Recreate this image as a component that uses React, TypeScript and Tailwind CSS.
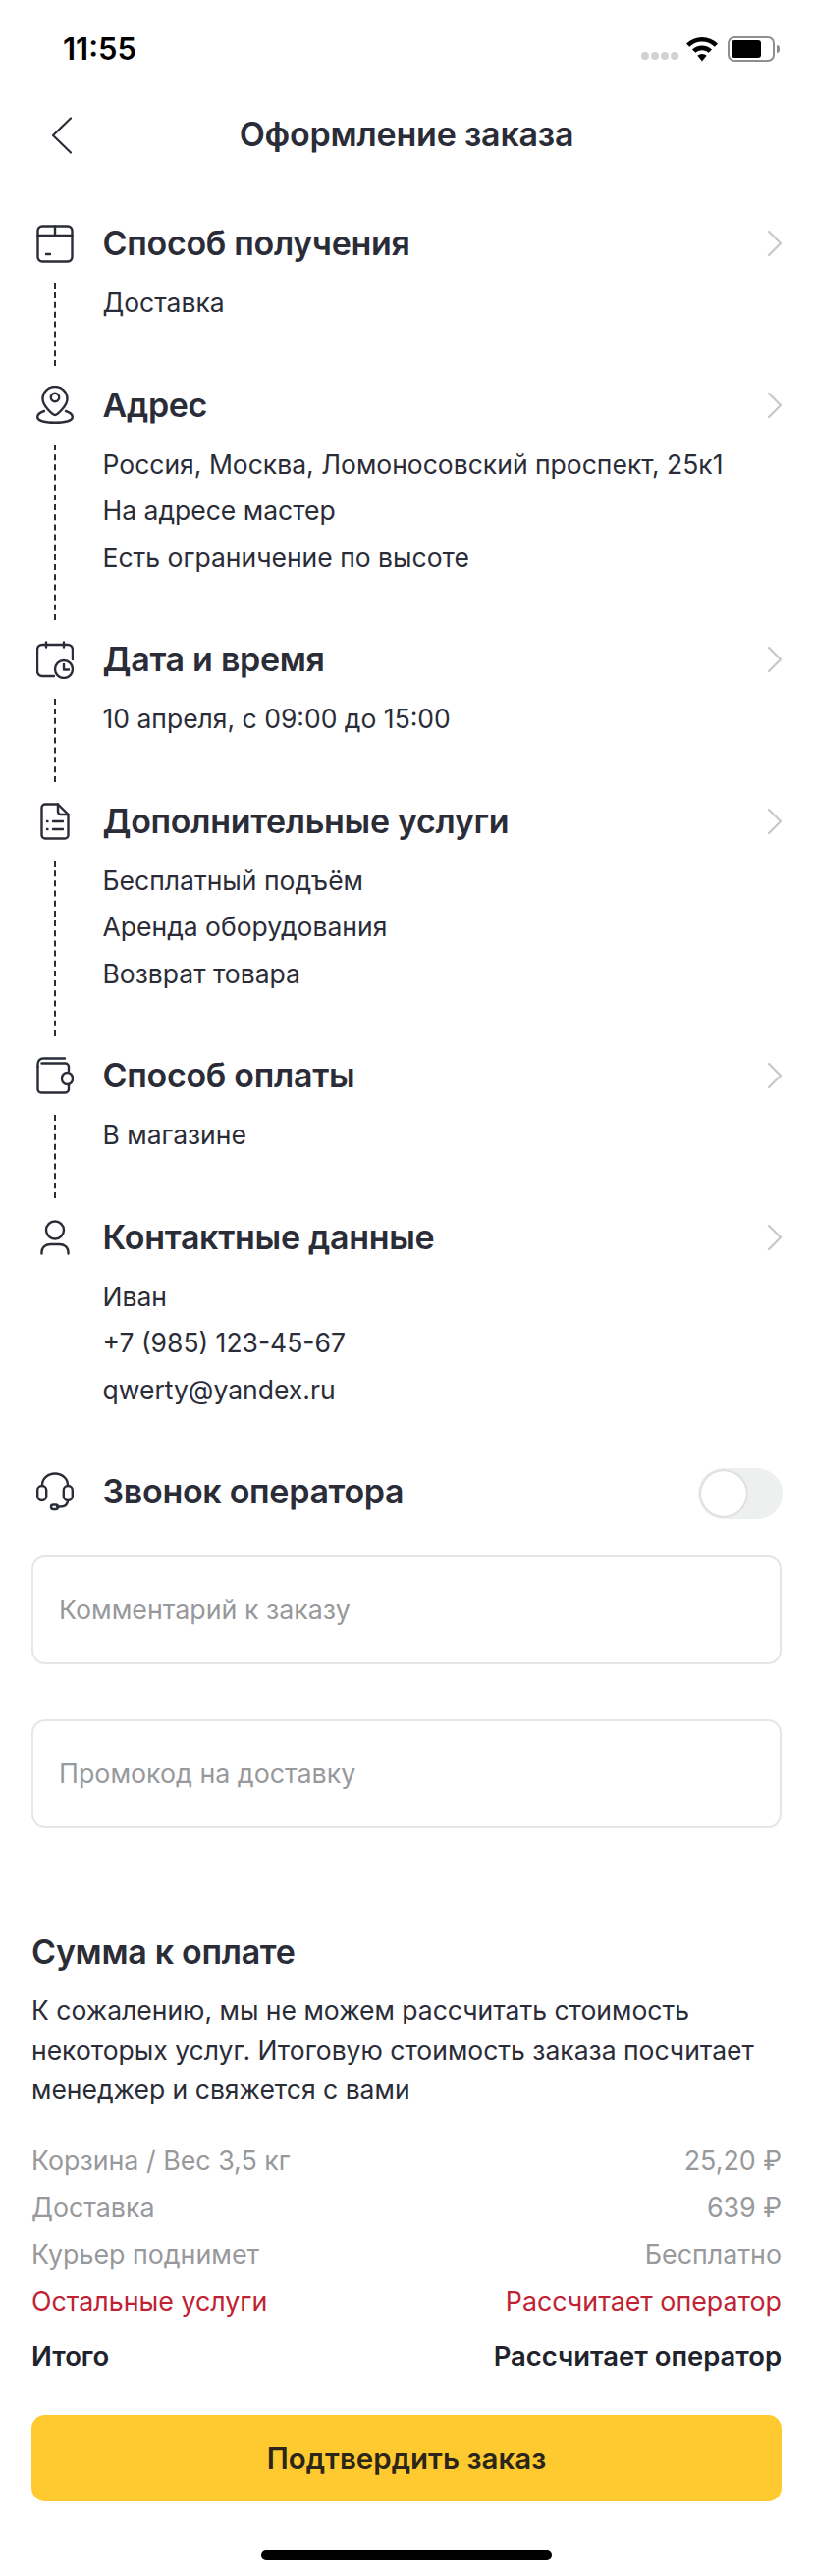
const INK = '#2a2c37';

const BoxIcon = () => (
  <svg width="38" height="39" viewBox="0 0 38 39" fill="none" stroke={INK} strokeWidth="2.4" strokeLinejoin="round" strokeLinecap="round">
    <path d="M6 1.500h26a4.500 4.500 0 0 1 4.500 4.500v27a4.500 4.500 0 0 1-4.500 4.500H6A4.500 4.500 0 0 1 1.500 33V6A4.500 4.500 0 0 1 6 1.500Z" />
    <path d="M1.500 11h35M19 1.500V11M10 30h4" />
  </svg>
);

const PinIcon = () => (
  <svg width="38" height="39" viewBox="0 0 38 39" fill="none" stroke={INK} strokeWidth="2.4" strokeLinejoin="round" strokeLinecap="round">
    <path d="M19 30c-2 0-12.500-9-12.500-16.500a12.500 12.500 0 0 1 25 0C31.500 21 21 30 19 30Z" />
    <circle cx="19" cy="12" r="4.200" />
    <path d="M8 26c-4 1.300-6.800 3.300-6.800 6 0 3.800 8 5.800 17.800 5.800S36.800 35.800 36.800 32c0-2.700-2.800-4.700-6.800-6" />
  </svg>
);

const CalendarIcon = () => (
  <svg width="38" height="39" viewBox="0 0 38 39" fill="none" stroke={INK} strokeWidth="2.4" strokeLinejoin="round" strokeLinecap="round">
    <path d="M18 36H6a5 5 0 0 1-5-5V9a5 5 0 0 1 5-5h26a5 5 0 0 1 5 5v10" />
    <path d="M10 1.500v5M28 1.500v5" />
    <circle cx="28" cy="29" r="9" />
    <path d="M28 24v5.500h5" />
  </svg>
);

const DocIcon = () => (
  <svg width="30" height="38" viewBox="0 0 30 38" fill="none" stroke={INK} strokeWidth="2.4" strokeLinejoin="round" strokeLinecap="round">
    <path d="M5 1.500h13l10.500 10.500v21a3.500 3.500 0 0 1-3.500 3.500H5A3.500 3.500 0 0 1 1.500 33V5A3.500 3.500 0 0 1 5 1.500Z" />
    <path d="M18 1.500V9a3 3 0 0 0 3 3h7.500" />
    <path d="M7 19h.5M7 27h.5M13 19h10M13 27h10" />
  </svg>
);

const WalletIcon = () => (
  <svg width="38" height="38" viewBox="0 0 38 38" fill="none" stroke={INK} strokeWidth="2.4" strokeLinejoin="round" strokeLinecap="round">
    <path d="M1.500 10V7a5.500 5.500 0 0 1 5.500-5.500h22" />
    <path d="M33 14v-4a3.500 3.500 0 0 0-3.500-3.500H5.500" />
    <path d="M1.500 10v23A3.500 3.500 0 0 0 5 36.500h24.500A3.500 3.500 0 0 0 33 33v-5" />
    <rect x="26" y="16" width="11" height="12" rx="5.500" />
  </svg>
);

const UserIcon = () => (
  <svg width="30" height="36" viewBox="0 0 30 36" fill="none" stroke={INK} strokeWidth="2.4" strokeLinejoin="round" strokeLinecap="round">
    <circle cx="15" cy="10.500" r="9" />
    <path d="M1.500 34.500v-1.500c0-5 4-8 9-8h9c5 0 9 3 9 8v1.500" />
  </svg>
);

const HeadsetIcon = () => (
  <svg width="38" height="40" viewBox="0 0 38 40" fill="none" stroke={INK} strokeWidth="2.4" strokeLinejoin="round" strokeLinecap="round">
    <path d="M6 14v-1a13 11.500 0 0 1 26 0v1" />
    <rect x="1.200" y="14" width="9" height="15" rx="4.500" />
    <rect x="27.800" y="14" width="9" height="15" rx="4.500" />
    <path d="M32 29c0 4-3 6.500-8 6.500h-3" />
    <rect x="15" y="33.500" width="7" height="4.500" rx="2.200" />
  </svg>
);

const Chevron = () => (
  <svg width="16" height="28" viewBox="0 0 16 28" fill="none" stroke="#c9cacb" strokeWidth="2.400" strokeLinecap="round" strokeLinejoin="round">
    <path d="M2 2l12 12L2 26" />
  </svg>
);

const steps = [
  { icon: <BoxIcon />, title: 'Способ получения', lines: ['Доставка'] },
  { icon: <PinIcon />, title: 'Адрес', lines: ['Россия, Москва, Ломоносовский проспект, 25к1', 'На адресе мастер', 'Есть ограничение по высоте'] },
  { icon: <CalendarIcon />, title: 'Дата и время', lines: ['10 апреля, с 09:00 до 15:00'] },
  { icon: <DocIcon />, title: 'Дополнительные услуги', lines: ['Бесплатный подъём', 'Аренда оборудования', 'Возврат товара'] },
  { icon: <WalletIcon />, title: 'Способ оплаты', lines: ['В магазине'] },
  { icon: <UserIcon />, title: 'Контактные данные', lines: ['Иван', '+7 (985) 123-45-67', 'qwerty@yandex.ru'] },
];

const prices = [
  { label: 'Корзина / Вес 3,5 кг', value: '25,20 ₽' },
  { label: 'Доставка', value: '639 ₽' },
  { label: 'Курьер поднимет', value: 'Бесплатно' },
];

export default function App() {
  return (
    <div className="w-[828px] h-[2625px] bg-white overflow-hidden font-['Inter','Noto_Sans',sans-serif] text-[#2a2c37]">
      {/* status bar */}
      <div className="h-[100px] pl-[64px] pr-[34px] pt-[30px] flex justify-between items-start">
        <div className="text-[31px] leading-[40px] font-semibold text-black">11:55</div>
        <div className="flex items-center gap-[8px] pt-[7px]">
          <div className="flex gap-[2px] mt-[14px]">
            <span className="w-[8px] h-[8px] rounded-full bg-[#d2d2d2]" />
            <span className="w-[8px] h-[8px] rounded-full bg-[#d2d2d2]" />
            <span className="w-[8px] h-[8px] rounded-full bg-[#d2d2d2]" />
            <span className="w-[8px] h-[8px] rounded-full bg-[#d2d2d2]" />
          </div>
          <svg width="32" height="25" viewBox="0 0 32 25" fill="#000">
            <path d="M16 0C10 0 4.500 2.300 0 6.500l3.200 3.300C6.800 6.500 11.200 4.600 16 4.600s9.200 1.900 12.800 5.200L32 6.500C27.500 2.300 22 0 16 0Z" />
            <path d="M16 8.500c-3.800 0-7.200 1.500-10 4l3.300 3.300c1.800-1.600 4.100-2.600 6.700-2.600s4.900 1 6.700 2.600l3.300-3.300c-2.800-2.500-6.200-4-10-4Z" />
            <path d="M16 17c-1.800 0-3.400 .7-4.600 1.800L16 24.500l4.600-5.700C19.400 17.700 17.800 17 16 17Z" />
          </svg>
          <div className="flex items-center gap-[2px] ml-[2px]">
            <div className="w-[48px] h-[26px] rounded-[7px] border-2 border-[#8e8e8e] p-[2px]">
              <div className="w-[30px] h-full rounded-[3px] bg-black" />
            </div>
            <div className="w-[3px] h-[8px] rounded-r-full bg-[#8e8e8e]" />
          </div>
        </div>
      </div>

      {/* header */}
      <div className="h-[76px] px-[52px] flex items-center relative">
        <svg width="22" height="38" viewBox="0 0 22 38" fill="none" stroke={INK} strokeWidth="2.200" strokeLinecap="round" strokeLinejoin="round" className="absolute">
          <path d="M20 1.500L2 19l18 17.500" />
        </svg>
        <div className="flex-1 text-center text-[34px] leading-[44px] font-semibold tracking-[-0.2px] -mt-[2px]">Оформление заказа</div>
      </div>

      {/* steps */}
      <div className="pl-[37px] pr-[31px] pt-[52px]">
        {steps.map((s, i) => (
          <div key={s.title} className="flex">
            <div className="w-[38px] shrink-0 flex flex-col items-center">
              <div className="h-[40px] flex items-center">{s.icon}</div>
              {i < steps.length - 1 && <div className="flex-1 my-[20px] border-l-2 border-dashed border-[#2a2c37]" />}
            </div>
            <div className="flex-1 ml-[29.500px] pb-[60px]">
              <div className="h-[40px] flex items-center justify-between">
                <div className="text-[34px] leading-[40px] font-semibold tracking-[-0.3px]">{s.title}</div>
                <Chevron />
              </div>
              <div className="mt-[17px]">
                {s.lines.map((l) => (
                  <div key={l} className="text-[26.500px] leading-[47.500px]">{l}</div>
                ))}
              </div>
            </div>
          </div>
        ))}

        {/* operator call */}
        <div className="flex items-center h-[40px]">
          <div className="w-[38px] shrink-0"><HeadsetIcon /></div>
          <div className="flex-1 ml-[29.500px] text-[34px] leading-[40px] font-semibold tracking-[-0.3px]">Звонок оператора</div>
          <div className="w-[86px] h-[52px] rounded-full bg-[#eef0f0] p-[3px] mt-[4px]">
            <div className="w-[46px] h-[46px] rounded-full bg-white shadow-[0_0_3px_rgba(0,0,0,0.25)]" />
          </div>
        </div>
      </div>

      {/* inputs */}
      <div className="px-[32px] pt-[45px] flex flex-col gap-[56px]">
        <div className="h-[111px] rounded-[14px] border-2 border-[#e6e6e6] px-[26px] flex items-center text-[26.800px] text-[#97999c]">Комментарий к заказу</div>
        <div className="h-[111px] rounded-[14px] border-2 border-[#e6e6e6] px-[26px] flex items-center text-[26.800px] text-[#97999c]">Промокод на доставку</div>
      </div>

      {/* summary */}
      <div className="px-[32px] pt-[104px]">
        <div className="text-[34px] leading-[44px] font-semibold tracking-[-0.3px]">Сумма к оплате</div>
        <div className="mt-[17px] text-[26.500px] leading-[40.500px]">
          К сожалению, мы не можем рассчитать стоимость
          <br />
          некоторых услуг. Итоговую стоимость заказа посчитает
          <br />
          менеджер и свяжется с вами
        </div>
        <div className="mt-[27px] text-[26.800px] leading-[48px]">
          {prices.map((p) => (
            <div key={p.label} className="flex justify-between text-[#97999c]">
              <span>{p.label}</span>
              <span>{p.value}</span>
            </div>
          ))}
          <div className="flex justify-between text-[#bf2233]">
            <span>Остальные услуги</span>
            <span>Рассчитает оператор</span>
          </div>
          <div className="flex justify-between font-semibold mt-[8px] text-[27.400px] text-[#20222c]">
            <span>Итого</span>
            <span>Рассчитает оператор</span>
          </div>
        </div>
        <div className="mt-[36px] h-[88px] pt-[2px] rounded-[14px] bg-[#ffca30] flex items-center justify-center text-[29.500px] font-semibold text-[#2b2619]">
          Подтвердить заказ
        </div>
      </div>

      {/* home indicator */}
      <div className="mt-[50px] mx-auto w-[296px] h-[10px] rounded-full bg-black" />
    </div>
  );
}
